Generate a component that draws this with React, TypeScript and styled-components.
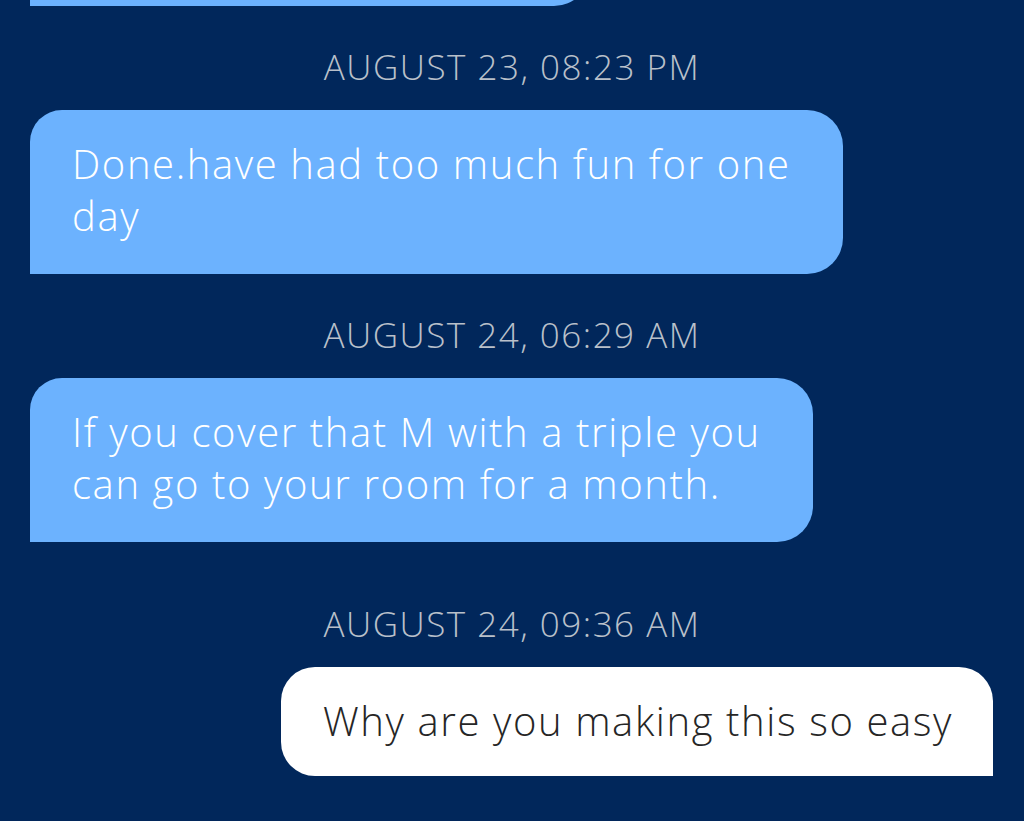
import React from "react";
import styled, { createGlobalStyle } from "styled-components";

const Global = createGlobalStyle`
  html, body { margin: 0; padding: 0; background: #01275b; }
  body { font-family: "Open Sans", "Lato", sans-serif; overflow: hidden; }
`;

const Thread = styled.div`
  width: 1024px;
  height: 821px;
  background: #01275b;
  display: flex;
  flex-direction: column;
  overflow: hidden;
`;

const Row = styled.div<{ $mine?: boolean }>`
  display: flex;
  justify-content: ${(p) => (p.$mine ? "flex-end" : "flex-start")};
  padding: ${(p) => (p.$mine ? "0 31px 0 0" : "0 0 0 30px")};
`;

const Bubble = styled.div<{ $mine?: boolean }>`
  background: ${(p) => (p.$mine ? "#ffffff" : "#6cb2fe")};
  color: ${(p) => (p.$mine ? "#262626" : "#ffffff")};
  border-radius: ${(p) => (p.$mine ? "34px 34px 0 34px" : "32px 36px 36px 0")};
  padding: ${(p) => (p.$mine ? "28px 40px 29px 42px" : "28px 52px 32px 42px")};
  font-size: 40px;
  font-weight: 300;
  line-height: 52px;
  letter-spacing: 1.6px;
  white-space: nowrap;
`;

const CutBubble = styled(Bubble)`
  width: 560px;
  height: 80px;
  padding: 0;
  margin-top: -74px;
`;

const Line = styled.span`
  display: block;
`;

const Stamp = styled.div<{ $gapTop: number }>`
  margin-top: ${(p) => p.$gapTop}px;
  margin-bottom: 23px;
  text-align: center;
  color: #b9c0ca;
  font-size: 35px;
  font-weight: 300;
  line-height: 40px;
  letter-spacing: 1.5px;
`;

type Msg = { stamp: string; lines: string[]; mine?: boolean; gap: number };

const messages: Msg[] = [
  { stamp: "AUGUST 23, 08:23 PM", lines: ["Done.have had too much fun for one", "day"], gap: 41 },
  { stamp: "AUGUST 24, 06:29 AM", lines: ["If you cover that M with a triple you", "can go to your room for a month."], gap: 41 },
  { stamp: "AUGUST 24, 09:36 AM", lines: ["Why are you making this so easy"], mine: true, gap: 62 },
];

export default function App() {
  return (
    <Thread>
      <Global />
      <Row>
        <CutBubble />
      </Row>
      {messages.map((m) => (
        <React.Fragment key={m.stamp}>
          <Stamp $gapTop={m.gap}>{m.stamp}</Stamp>
          <Row $mine={m.mine}>
            <Bubble $mine={m.mine}>
              {m.lines.map((l) => (
                <Line key={l}>{l}</Line>
              ))}
            </Bubble>
          </Row>
        </React.Fragment>
      ))}
    </Thread>
  );
}
